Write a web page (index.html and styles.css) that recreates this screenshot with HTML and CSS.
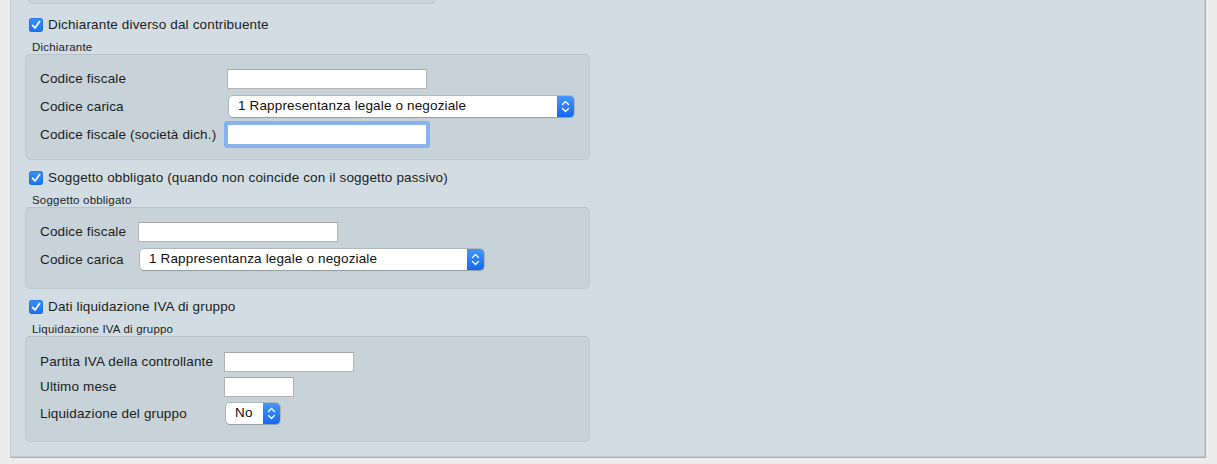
FILE: index.html
```html
<!DOCTYPE html>
<html lang="it">
<head>
<meta charset="utf-8">
<title>Dichiarante</title>
<link rel="stylesheet" href="styles.css">
</head>
<body>
<div class="page">
  <div class="panel">
    <div class="top-box"></div>

    <label class="check-row">
      <span class="checkbox"><svg viewBox="0 0 14 14" width="14" height="14"><path d="M3.6 7.4 L6 10 L10.6 3.6" fill="none" stroke="#fff" stroke-width="1.7" stroke-linecap="round" stroke-linejoin="round"/></svg></span>
      <span class="check-text">Dichiarante diverso dal contribuente</span>
    </label>
    <div class="section-label">Dichiarante</div>
    <div class="group group-1">
      <div class="row row-a">
        <span class="label">Codice fiscale</span>
        <span class="input w200"></span>
      </div>
      <div class="row row-b">
        <span class="label">Codice carica</span>
        <span class="select w345"><span class="select-text">1 Rappresentanza legale o negoziale</span><span class="stepper"><svg viewBox="0 0 17 21" width="17" height="21"><path d="M5.5 8.5 L8.5 5.5 L11.5 8.5 M5.5 12.5 L8.5 15.5 L11.5 12.5" fill="none" stroke="#fff" stroke-width="1.3" stroke-linecap="round" stroke-linejoin="round"/></svg></span></span>
      </div>
      <div class="row row-b">
        <span class="label">Codice fiscale (società dich.)</span>
        <span class="input w200 focused"></span>
      </div>
    </div>

    <label class="check-row">
      <span class="checkbox"><svg viewBox="0 0 14 14" width="14" height="14"><path d="M3.6 7.4 L6 10 L10.6 3.6" fill="none" stroke="#fff" stroke-width="1.7" stroke-linecap="round" stroke-linejoin="round"/></svg></span>
      <span class="check-text">Soggetto obbligato (quando non coincide con il soggetto passivo)</span>
    </label>
    <div class="section-label">Soggetto obbligato</div>
    <div class="group group-2">
      <div class="row row-a">
        <span class="label">Codice fiscale</span>
        <span class="input w200"></span>
      </div>
      <div class="row row-b">
        <span class="label">Codice carica</span>
        <span class="select w344"><span class="select-text">1 Rappresentanza legale o negoziale</span><span class="stepper"><svg viewBox="0 0 17 21" width="17" height="21"><path d="M5.5 8.5 L8.5 5.5 L11.5 8.5 M5.5 12.5 L8.5 15.5 L11.5 12.5" fill="none" stroke="#fff" stroke-width="1.3" stroke-linecap="round" stroke-linejoin="round"/></svg></span></span>
      </div>
    </div>

    <label class="check-row">
      <span class="checkbox"><svg viewBox="0 0 14 14" width="14" height="14"><path d="M3.6 7.4 L6 10 L10.6 3.6" fill="none" stroke="#fff" stroke-width="1.7" stroke-linecap="round" stroke-linejoin="round"/></svg></span>
      <span class="check-text">Dati liquidazione IVA di gruppo</span>
    </label>
    <div class="section-label">Liquidazione IVA di gruppo</div>
    <div class="group group-3">
      <div class="row row-a">
        <span class="label">Partita IVA della controllante</span>
        <span class="input w130"></span>
      </div>
      <div class="row row-c">
        <span class="label">Ultimo mese</span>
        <span class="input w70"></span>
      </div>
      <div class="row row-d">
        <span class="label">Liquidazione del gruppo</span>
        <span class="select w54"><span class="select-text">No</span><span class="stepper"><svg viewBox="0 0 17 21" width="17" height="21"><path d="M5.5 8.5 L8.5 5.5 L11.5 8.5 M5.5 12.5 L8.5 15.5 L11.5 12.5" fill="none" stroke="#fff" stroke-width="1.3" stroke-linecap="round" stroke-linejoin="round"/></svg></span></span>
      </div>
    </div>
  </div>
</div>
</body>
</html>
```
FILE: styles.css
```css
html, body {
  margin: 0;
  padding: 0;
  background: #ececec;
}

body {
  font-family: "Liberation Sans", Arial, sans-serif;
  font-size: 13.5px;
  letter-spacing: 0.15px;
  color: #1d1d1d;
  width: 1217px;
  height: 464px;
  overflow: hidden;
}

.page {
  padding-left: 10px;
}

.panel {
  width: 1194px;
  background: #d1dde3;
  border-left: 1px solid #c3cbcf;
  border-right: 1px solid #a9b1b5;
  border-bottom: 1px solid #a9b1b5;
  box-shadow: inset -1px -1px 0 #c0cacf;
  padding: 0 0 15px 0;
  display: flex;
  flex-direction: column;
  align-items: flex-start;
}

.top-box {
  margin-left: 17px;
  width: 405px;
  height: 3px;
  background: #c8d4da;
  border: 1px solid #bfcad0;
  border-top: none;
  border-radius: 0 0 4px 4px;
}

.check-row {
  display: flex;
  align-items: center;
  height: 14px;
  margin-left: 18px;
  margin-top: 11px;
}

.panel > .check-row:nth-child(2) {
  margin-top: 14px;
}

.checkbox {
  width: 14px;
  height: 14px;
  border-radius: 3px;
  background: linear-gradient(#3a8ff7, #1a72f0);
  box-shadow: inset 0 0 0 1px rgba(20, 90, 210, 0.35);
  display: flex;
}

.check-text {
  margin-left: 5px;
  line-height: 14px;
}

.section-label {
  margin-left: 21px;
  margin-top: 9px;
  font-size: 11.5px;
  letter-spacing: 0.2px;
  line-height: 13px;
}

.group {
  margin-left: 14px;
  width: 565px;
  background: #c7d3d9;
  border: 1px solid #bfcbd1;
  border-top-color: #b8c4ca;
  border-radius: 5px;
  padding: 14px 0 17px 14px;
  box-sizing: border-box;
  display: flex;
  flex-direction: column;
}

.group-1 {
  padding-bottom: 14px;
}

.group-2 {
  padding-bottom: 18px;
}

.group-3 {
  padding-top: 15px;
}

.row {
  display: flex;
  align-items: center;
}

.row-b {
  margin-top: 7px;
}

.row-c {
  margin-top: 5px;
}

.row-d {
  margin-top: 6px;
}

.label {
  line-height: 20px;
  flex: none;
}

.group-1 .label { width: 187px; }
.group-2 .label { width: 98px; }
.group-3 .label { width: 184px; }

.input {
  height: 20px;
  box-sizing: border-box;
  background: #fff;
  border: 1px solid #b3b3b3;
  border-top-color: #a6a6a6;
  flex: none;
}

.w200 { width: 200px; }
.w130 { width: 130px; }
.w70 { width: 70px; }

.input.focused {
  height: 21px;
  border-color: #8fb5e8;
  box-shadow: 0 0 0 3px #86b3ef;
  border-radius: 1px;
}

.select {
  margin-left: 2px;
  height: 21px;
  box-sizing: border-box;
  display: flex;
  align-items: center;
  background: #fff;
  border-radius: 4px;
  box-shadow: 0 0 0 0.5px rgba(0, 0, 0, 0.25), 0 1px 1px rgba(0, 0, 0, 0.15);
  overflow: hidden;
  flex: none;
}

.w345 { width: 345px; }
.w344 { width: 344px; }
.w54 { width: 54px; }

.select-text {
  flex: 1;
  padding-left: 9px;
  line-height: 19px;
  padding-bottom: 2px;
  color: #111;
  white-space: nowrap;
  overflow: hidden;
}

.stepper {
  width: 17px;
  height: 21px;
  flex: none;
  display: flex;
  background: linear-gradient(#4596f9, #1469f2);
}
```
